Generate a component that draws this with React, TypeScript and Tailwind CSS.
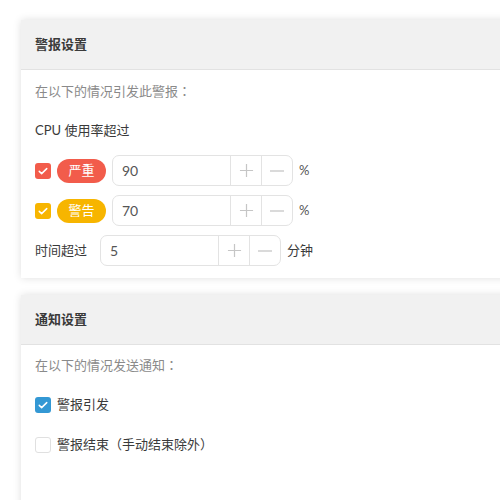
import React from 'react'

const font = { fontFamily: 'Lato, "Noto Sans CJK SC", sans-serif' }

const Colon = () => <span className="[font-family:'Noto_Sans_CJK_TC',sans-serif]">：</span>

const Check = ({ color }: { color: string }) => (
  <span className={`flex h-[16px] w-[16px] shrink-0 items-center justify-center rounded-[3px] ${color}`}>
    <svg viewBox="0 0 16 16" className="h-[12px] w-[12px]" fill="none" stroke="white" strokeWidth="2" strokeLinecap="round" strokeLinejoin="round">
      <path d="M3 8.5l3.2 3L13 4.8" />
    </svg>
  </span>
)

const Stepper = ({ value }: { value: string }) => (
  <div className="flex h-[31px] w-[181px] shrink-0 items-stretch rounded-[7px] border border-[#e3e3e3] bg-white">
    <div className="flex flex-1 items-center pl-[9px] text-[14px] text-[#555]">{value}</div>
    <div className="flex w-[31px] items-center justify-center border-l border-[#e3e3e3]">
      <svg viewBox="0 0 16 16" className="h-[15px] w-[15px]" stroke="#c6c6c6" strokeWidth="1.3">
        <path d="M8 1v14M1 8h14" />
      </svg>
    </div>
    <div className="flex w-[31px] items-center justify-center border-l border-[#e3e3e3]">
      <svg viewBox="0 0 16 16" className="h-[16px] w-[16px]" stroke="#c6c6c6" strokeWidth="1.3">
        <path d="M1 8h14" />
      </svg>
    </div>
  </div>
)

const Header = ({ title }: { title: string }) => (
  <div className="flex h-[50px] items-center border-b border-[#e2e2e2] bg-[#f1f1f1] px-[14px] pt-[1px]">
    <span className="text-[13px] font-bold text-[#3a3a3a]">{title}</span>
  </div>
)

export default function App() {
  return (
    <div className="h-[500px] w-[500px] overflow-hidden bg-white pl-[21px] pt-[20px] [text-spacing-trim:space-all]" style={font}>
      <section className="w-[520px] bg-white shadow-[0_0_8px_rgba(0,0,0,0.13)]">
        <Header title="警报设置" />
        <div className="px-[14px] pb-[12px] pt-[11px]">
          <p className="text-[13px] leading-[20px] text-[#8a8a8a]">在以下的情况引发此警报<Colon /></p>
          <p className="mt-[19px] text-[13px] leading-[20px] text-[#3a3a3a]">CPU 使用率超过</p>
          <div className="mt-[15px] flex items-center gap-[6px]">
            <Check color="bg-[#f25c4b]" />
            <span className="flex h-[24px] w-[49px] items-center justify-center rounded-full bg-[#f25c4b] text-[13px] text-white">严重</span>
            <Stepper value="90" />
            <span className="text-[13px] text-[#555]">%</span>
          </div>
          <div className="mt-[9px] flex items-center gap-[6px]">
            <Check color="bg-[#f7b500]" />
            <span className="flex h-[24px] w-[49px] items-center justify-center rounded-full bg-[#f7b500] text-[13px] text-white">警告</span>
            <Stepper value="70" />
            <span className="text-[13px] text-[#555]">%</span>
          </div>
          <div className="mt-[9px] flex items-center">
            <span className="w-[65px] text-[13px] text-[#3a3a3a]">时间超过</span>
            <Stepper value="5" />
            <span className="ml-[6px] text-[13px] text-[#3a3a3a]">分钟</span>
          </div>
        </div>
      </section>

      <section className="mt-[17px] h-[300px] w-[520px] bg-white shadow-[0_0_8px_rgba(0,0,0,0.13)]">
        <Header title="通知设置" />
        <div className="px-[14px] pt-[10px]">
          <p className="text-[13px] leading-[20px] text-[#8a8a8a]">在以下的情况发送通知<Colon /></p>
          <div className="mt-[20px] flex h-[20px] items-center gap-[6px]">
            <Check color="bg-[#3398d4]" />
            <span className="text-[13px] text-[#3a3a3a]">警报引发</span>
          </div>
          <div className="mt-[20px] flex h-[20px] items-center gap-[6px]">
            <span className="h-[16px] w-[16px] rounded-[3px] border border-[#e0e0e0] bg-white" />
            <span className="text-[13px] text-[#3a3a3a]">警报结束（手动结束除外）</span>
          </div>
        </div>
      </section>
    </div>
  )
}
